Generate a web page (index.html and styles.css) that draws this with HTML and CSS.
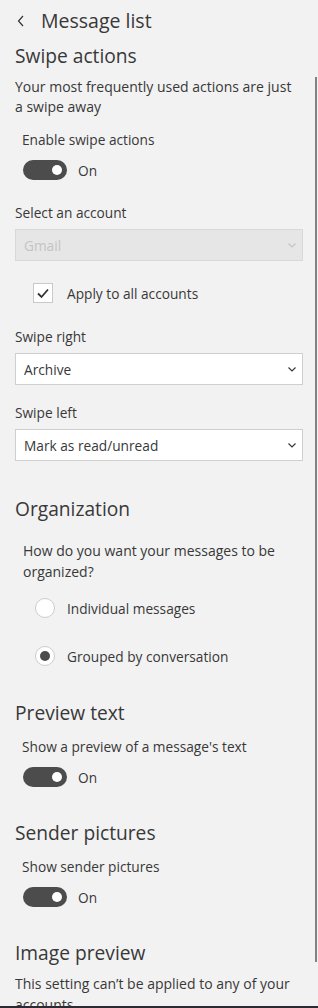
FILE: index.html
```html
<!DOCTYPE html>
<html lang="en">
<head>
  <meta charset="UTF-8" />
  <meta name="viewport" content="width=device-width, initial-scale=1.0"/>
  <title>Message list</title>
  <link rel="stylesheet" href="styles.css">
</head>
<body>
  <div class="page">
    <header class="title-bar">
      <svg class="back" width="8" height="12" viewBox="0 0 8 12" aria-hidden="true">
        <path d="M6 1L1.5 6L6 11" fill="none" stroke="#333" stroke-width="1.2"/>
      </svg>
      <h1>Message list</h1>
    </header>

    <section class="group">
      <h2>Swipe actions</h2>
      <p class="intro">Your most frequently used actions are just a swipe away</p>
      <div class="label indent enable-label">Enable swipe actions</div>
      <div class="toggle-row">
        <span class="toggle on"></span>
        <span class="toggle-text">On</span>
      </div>

      <div class="label account-label">Select an account</div>
      <select class="select" disabled>
        <option>Gmail</option>
      </select>

      <label class="check-row">
        <span class="checkbox">
          <svg width="14" height="12" viewBox="0 0 14 12" aria-hidden="true">
            <path d="M2 6.5L5.5 10L12 2.5" fill="none" stroke="#333" stroke-width="1.8"/>
          </svg>
        </span>
        <span>Apply to all accounts</span>
      </label>

      <div class="label right-label">Swipe right</div>
      <select class="select">
        <option>Archive</option>
      </select>

      <div class="label left-label">Swipe left</div>
      <select class="select">
        <option>Mark as read/unread</option>
      </select>
    </section>

    <section class="group organization">
      <h2>Organization</h2>
      <p class="question">How do you want your messages to be organized?</p>
      <div class="radio-row first">
        <span class="radio"></span>
        <span>Individual messages</span>
      </div>
      <div class="radio-row second">
        <span class="radio checked"></span>
        <span>Grouped by conversation</span>
      </div>
    </section>

    <section class="group preview">
      <h2>Preview text</h2>
      <div class="label indent small-gap">Show a preview of a message's text</div>
      <div class="toggle-row">
        <span class="toggle on"></span>
        <span class="toggle-text">On</span>
      </div>
    </section>

    <section class="group pictures">
      <h2>Sender pictures</h2>
      <div class="label indent small-gap">Show sender pictures</div>
      <div class="toggle-row">
        <span class="toggle on"></span>
        <span class="toggle-text">On</span>
      </div>
    </section>

    <section class="group images">
      <h2>Image preview</h2>
      <p class="note">This setting can’t be applied to any of your accounts</p>
    </section>
  </div>
  <div class="scroll-thumb"></div>
</body>
</html>
```

FILE: styles.css
```css
body {
  margin: 0;
  background-color: #f2f2f2;
  color: #383838;
  font-family: "Open Sans", "Noto Sans", sans-serif;
  overflow: hidden;
}
.page {
  height: 1006px;
  overflow: hidden;
  border-bottom: 2px solid #2e2a33;
  padding: 0 15px 0 15px;
}

.title-bar {
  height: 42px;
  display: flex;
  align-items: center;
  gap: 16px;
  padding-left: 2px;
}
.title-bar h1 {
  margin: 0;
  font-size: 19.5px;
  font-weight: 400;
  line-height: 28px;
}

h2 {
  margin: 0;
  font-size: 19.2px;
  font-weight: 400;
  line-height: 28px;
}

.intro {
  margin: 7px 0 0;
  max-width: 282px;
  font-size: 14px;
  line-height: 20px;
}

.label {
  font-size: 13.7px;
  line-height: 20px;
}
.indent { padding-left: 7px; }
.enable-label { margin-top: 13px; }
.account-label { margin-top: 23px; }
.right-label { margin-top: 24px; }
.left-label { margin-top: 18px; }
.small-gap { margin-top: 10px; }

.toggle-row {
  display: flex;
  align-items: center;
  gap: 11px;
  margin-top: 10px;
  padding-left: 8px;
  height: 20px;
  font-size: 13.7px;
}
.toggle {
  width: 44px;
  height: 20px;
  border-radius: 10px;
  background-color: #4c4c4c;
  display: flex;
  align-items: center;
  justify-content: flex-end;
  padding-right: 5px;
  box-sizing: border-box;
}
.toggle::after {
  content: "";
  width: 10px;
  height: 10px;
  border-radius: 50%;
  background-color: #fff;
}

.select {
  display: block;
  width: 100%;
  height: 32px;
  margin-top: 6px;
  padding: 0 28px 0 8px;
  font-family: inherit;
  font-size: 13.7px;
  color: #383838;
  background-color: #fff;
  border: 1px solid #cfcfcf;
  border-radius: 0;
  appearance: none;
  background-image: url("data:image/svg+xml,%3Csvg width='8' height='5' viewBox='0 0 8 5' xmlns='http://www.w3.org/2000/svg'%3E%3Cpath d='M0.5 0.5L4 4L7.5 0.5' fill='none' stroke='%23333' stroke-width='1.1'/%3E%3C/svg%3E");
  background-repeat: no-repeat;
  background-position: right 6px center;
  outline: none;
}
.select:disabled {
  background-color: #e6e6e6;
  border-color: #d8d8d8;
  color: #c4c4c4;
  opacity: 1;
  background-image: url("data:image/svg+xml,%3Csvg width='8' height='5' viewBox='0 0 8 5' xmlns='http://www.w3.org/2000/svg'%3E%3Cpath d='M0.5 0.5L4 4L7.5 0.5' fill='none' stroke='%23c4c4c4' stroke-width='1.1'/%3E%3C/svg%3E");
}

.check-row {
  display: flex;
  align-items: center;
  gap: 14px;
  margin-top: 22px;
  padding-left: 18px;
  height: 20px;
  font-size: 13.7px;
}
.checkbox {
  width: 18px;
  height: 18px;
  border: 1px solid #c9c9c9;
  background-color: #fff;
  display: flex;
  align-items: center;
  justify-content: center;
}

.organization { margin-top: 34px; }
.question {
  margin: 17px 0 0;
  padding-left: 8px;
  font-size: 14px;
  line-height: 21px;
}
.radio-row {
  display: flex;
  align-items: center;
  gap: 12px;
  height: 20px;
  padding-left: 20px;
  font-size: 13.7px;
}
.radio-row.first { margin-top: 16px; }
.radio-row.second { margin-top: 28px; }
.radio {
  width: 18px;
  height: 18px;
  border: 1px solid #cdcdcd;
  border-radius: 50%;
  background-color: #fff;
  display: flex;
  align-items: center;
  justify-content: center;
}
.radio.checked::after {
  content: "";
  width: 10px;
  height: 10px;
  border-radius: 50%;
  background-color: #4c4c4c;
}

.preview { margin-top: 33px; }
.pictures { margin-top: 32px; }
.images { margin-top: 32px; }
.note {
  margin: 6px 0 0;
  font-size: 14px;
  line-height: 21px;
}

.scroll-thumb {
  position: fixed;
  top: 77px;
  right: 1px;
  width: 2px;
  height: 885px;
  background-color: #828282;
}
```
